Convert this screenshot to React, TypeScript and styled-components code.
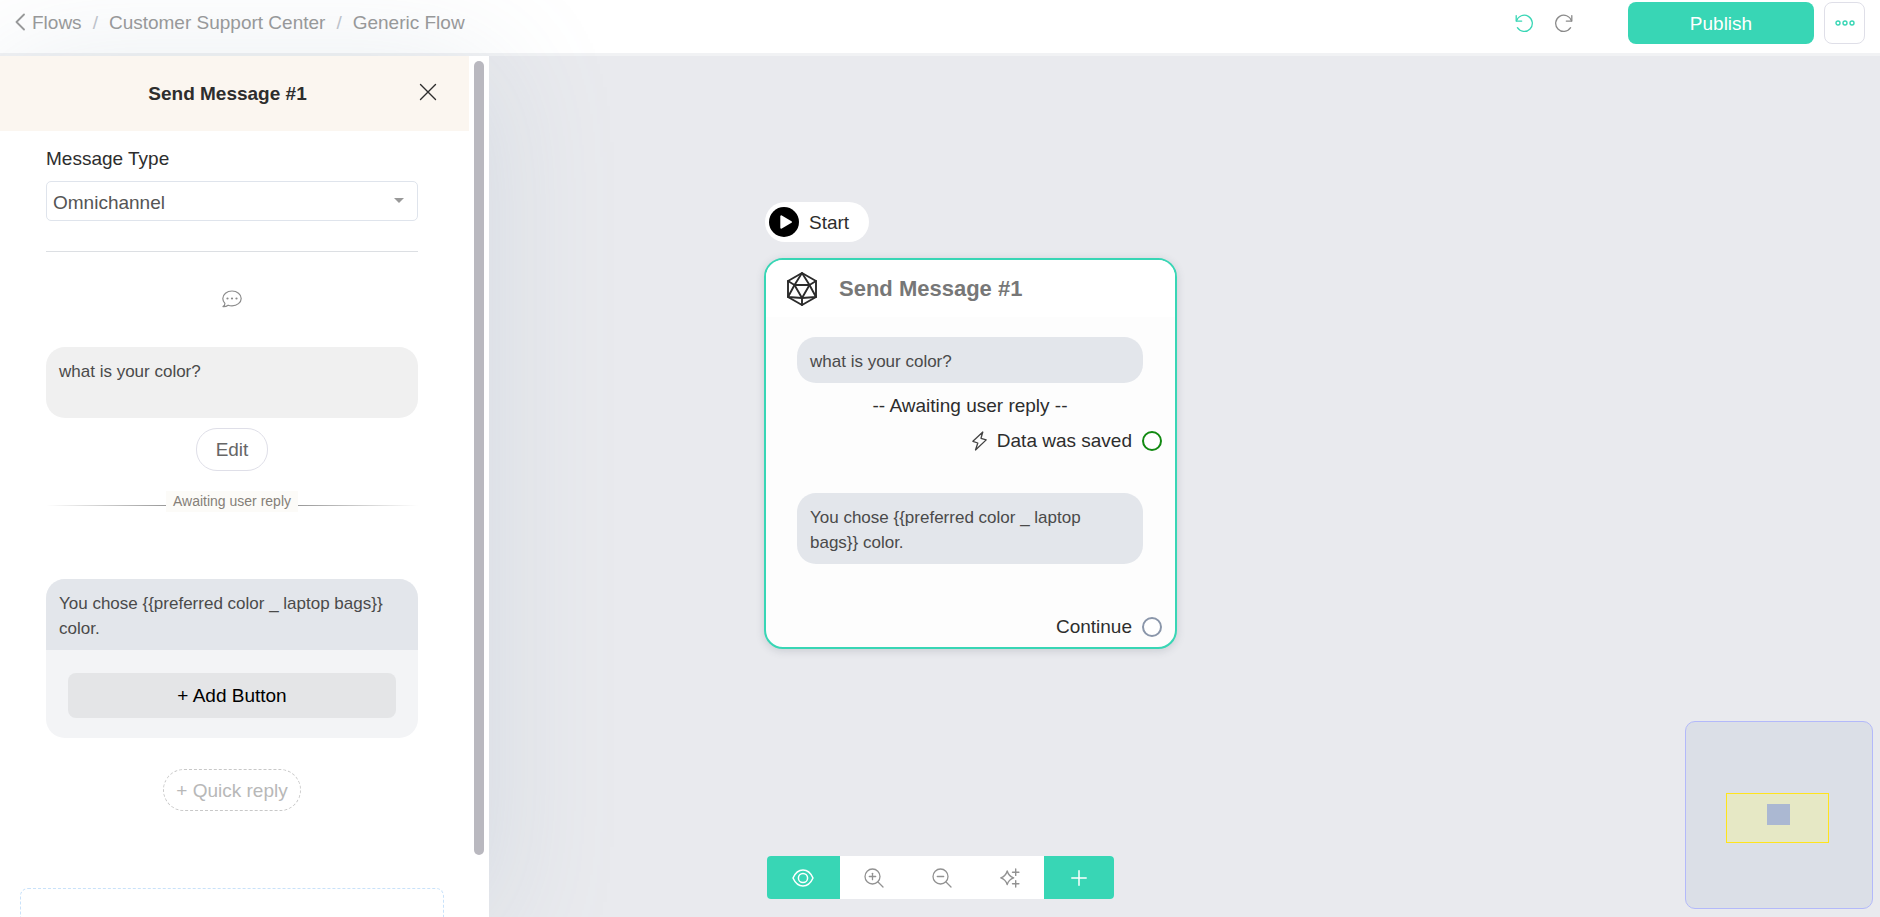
import React from "react";
import styled, { createGlobalStyle, css } from "styled-components";

const GlobalStyle = createGlobalStyle`
  *, *::before, *::after { box-sizing: border-box; }
  html, body, #root { height: 100%; }
  body {
    margin: 0;
    background: #e9eaee;
    color: #2d2d2d;
    font-family: "Liberation Sans", Arial, sans-serif;
    font-size: 19px;
    line-height: 25px;
  }
  button, select { font: inherit; color: inherit; margin: 0; }
  button { cursor: pointer; }
  h1, h2, p { margin: 0; }
  svg { display: block; flex: none; }
`;

const teal = "#38d6b5";

const Page = styled.div`
  display: flex;
  flex-direction: column;
  height: 100%;
  overflow: hidden;
`;

/* ---------- top bar ---------- */

const TopBar = styled.header`
  display: flex;
  align-items: flex-start;
  justify-content: space-between;
  height: 56px;
  flex: none;
  padding: 2px 15px 0 15px;
  background: #fff;
  border-bottom: 3px solid #f1f2f4;
`;

const Breadcrumbs = styled.nav`
  display: flex;
  align-items: center;
  gap: 11px;
  height: 40px;
  color: #c0c4cc;
`;

const Crumb = styled.a`
  display: flex;
  align-items: center;
  gap: 7px;
  color: #999;
  text-decoration: none;
`;

const Actions = styled.div`
  display: flex;
  align-items: center;
  gap: 10px;
`;

const History = styled.div`
  display: flex;
  gap: 17px;
  margin-right: 44px;
`;

const IconButton = styled.button<{ $color: string }>`
  display: flex;
  align-items: center;
  justify-content: center;
  width: 22px;
  height: 28px;
  padding: 0;
  border: 0;
  background: none;
  color: ${(p) => p.$color};
`;

const PublishButton = styled.button`
  width: 186px;
  height: 42px;
  border: 0;
  border-radius: 8px;
  background: ${teal};
  color: #fff;
`;

const MoreButton = styled.button`
  display: flex;
  align-items: center;
  justify-content: center;
  width: 41px;
  height: 42px;
  padding: 0;
  border: 1px solid #dfdfe8;
  border-radius: 8px;
  background: #fff;
  color: ${teal};
`;

/* ---------- side panel ---------- */

const Workspace = styled.main`
  position: relative;
  display: flex;
  flex: 1;
  min-height: 0;
`;

const SidePanel = styled.aside`
  display: flex;
  position: relative;
  z-index: 1;
  width: 489px;
  flex: none;
  background: #fff;
  box-shadow: 0 8px 120px rgba(130, 155, 175, 0.19);
`;

const PanelScroll = styled.div`
  flex: 1;
  min-width: 0;
  overflow: hidden;
`;

const ScrollTrack = styled.div`
  width: 20px;
  padding: 5px;
`;

const ScrollThumb = styled.div`
  height: calc(100% - 57px);
  border-radius: 5px;
  background: #b9b8bf;
`;

const PanelHeader = styled.div`
  display: flex;
  align-items: center;
  height: 75px;
  padding: 0 27px 0 41px;
  background: #fbf6f0;
`;

const PanelTitle = styled.h1`
  flex: 1;
  font-size: 19px;
  text-align: center;
`;

const CloseButton = styled.button`
  display: flex;
  align-items: flex-start;
  justify-content: center;
  width: 28px;
  height: 22px;
  padding: 0;
  border: 0;
  background: none;
`;

const PanelBody = styled.div`
  display: flex;
  flex-direction: column;
  align-items: center;
  padding: 15px 25px 0 20px;
`;

const Section = styled.section`
  display: flex;
  flex-direction: column;
  align-items: center;
  align-self: stretch;
  padding: 0 26px;
`;

const Field = styled.div`
  align-self: stretch;
  padding-bottom: 30px;
  border-bottom: 1px solid #dcdfe3;
`;

const FieldLabel = styled.label`
  display: block;
  margin-bottom: 10px;
`;

const SelectBox = styled.div`
  position: relative;
`;

const Select = styled.select`
  appearance: none;
  display: block;
  width: 100%;
  height: 40px;
  padding: 2px 30px 0 6px;
  border: 1px solid #dfe4ec;
  border-radius: 5px;
  background: #fff;
  color: #555;
`;

const Caret = styled.svg`
  position: absolute;
  top: 17px;
  right: 14px;
  pointer-events: none;
`;

const ChatMark = styled.div`
  padding: 38px 0 39px;
  color: #8c8c8c;
`;

const bubble = css`
  padding: 12px 13px 9px;
  color: #4a4a4a;
  font-size: 17px;
  line-height: 25px;
`;

const QuestionBubble = styled.p`
  ${bubble}
  align-self: stretch;
  min-height: 71px;
  border-radius: 19px;
  background: #f0f0f0;
`;

const PillButton = styled.button<{ $dashed?: boolean }>`
  height: ${(p) => (p.$dashed ? 42 : 43)}px;
  padding: 0 ${(p) => (p.$dashed ? 12 : 19)}px;
  border: 1px ${(p) => (p.$dashed ? "dashed #c8c8c8" : "solid #dfdfe8")};
  border-radius: 21px;
  background: #fff;
  color: ${(p) => (p.$dashed ? "#b8b8b8" : "#666")};
`;

const EditRow = styled.div`
  padding: 10px 0 20px;
`;

const WaitingRule = styled.div`
  display: flex;
  align-self: stretch;
  align-items: center;
  margin-bottom: 67px;
`;

const WaitingText = styled.span`
  padding: 0 7px;
  background: #fcfbf8;
  color: #857f78;
  font-size: 14px;
  line-height: 21px;
`;

const FadeLine = styled.span<{ $to: "left" | "right" }>`
  flex: 1;
  height: 1px;
  margin-top: 8px;
  background: linear-gradient(to ${(p) => p.$to}, #999, transparent);
`;

const ReplyCard = styled.div`
  align-self: stretch;
  overflow: hidden;
  margin-bottom: 31px;
  border-radius: 19px;
  background: #f3f4f6;
`;

const ReplyText = styled.p`
  ${bubble}
  background: #e3e6eb;
`;

const ReplyActions = styled.div`
  display: flex;
  padding: 23px 22px 20px;
`;

const AddButton = styled.button`
  flex: 1;
  height: 45px;
  border: 0;
  border-radius: 8px;
  background: #e4e5e7;
  color: #000;
`;

const DropZone = styled.div`
  align-self: stretch;
  height: 120px;
  margin-top: 77px;
  border: 1px dashed #c9e2fa;
  border-radius: 8px;
`;

/* ---------- canvas ---------- */

const Canvas = styled.div`
  position: relative;
  flex: 1;
  min-width: 0;
  overflow: hidden;
`;

const StartNode = styled.div`
  position: absolute;
  top: 146px;
  left: 276px;
  display: flex;
  align-items: center;
  gap: 10px;
  height: 40px;
  padding: 0 20px 0 4px;
  border-radius: 20px;
  background: #fff;
`;

const MessageNode = styled.article`
  position: absolute;
  top: 202px;
  left: 275px;
  width: 413px;
  overflow: hidden;
  border: 2px solid ${teal};
  border-radius: 19px;
  background: #fdfdfd;
  box-shadow: 0 2px 8px rgba(60, 70, 90, 0.18);
`;

const NodeHeader = styled.div`
  display: flex;
  align-items: center;
  gap: 22px;
  height: 57px;
  padding: 0 21px;
  background: #fff;
`;

const NodeTitle = styled.h2`
  color: #777;
  font-size: 22px;
`;

const NodeBody = styled.div`
  display: flex;
  flex-direction: column;
  padding: 20px 13px 8px 31px;
`;

const NodeBubble = styled.p`
  ${bubble}
  margin-right: 19px;
  border-radius: 19px;
  background: #e3e6eb;
`;

const NodeStatus = styled.p`
  margin: 10px 19px 10px 0;
  text-align: center;
`;

const Outlet = styled.div<{ $before?: number; $after?: number }>`
  display: flex;
  align-items: center;
  justify-content: flex-end;
  gap: 10px;
  margin-top: ${(p) => p.$before ?? 0}px;
  margin-bottom: ${(p) => p.$after ?? 0}px;
`;

const Port = styled.span<{ $color: string }>`
  width: 20px;
  height: 20px;
  border: 2px solid ${(p) => p.$color};
  border-radius: 50%;
  background: #fff;
`;

const ToolbarLayer = styled.div`
  position: absolute;
  right: 0;
  bottom: 18px;
  left: 0;
  display: flex;
  justify-content: center;
`;

const Toolbar = styled.div`
  display: flex;
  overflow: hidden;
  border-radius: 4px;
  background: #fff;
`;

const ToolButton = styled.button<{ $filled?: boolean; $width?: number }>`
  display: flex;
  align-items: center;
  justify-content: center;
  width: ${(p) => p.$width ?? 68}px;
  height: 43px;
  padding: 0;
  border: 0;
  background: ${(p) => (p.$filled ? teal : "#fff")};
  color: ${(p) => (p.$filled ? "#fff" : "#929292")};
`;

const MiniMap = styled.div`
  position: absolute;
  right: 7px;
  bottom: 8px;
  width: 188px;
  height: 188px;
  border: 1px solid #b3b9fa;
  border-radius: 10px;
  background: #dbdfe7;
`;

const MiniViewport = styled.div`
  position: absolute;
  top: 71px;
  left: 40px;
  width: 103px;
  height: 50px;
  border: 1px solid #ffe41c;
  background: #e6e8c5;
`;

const MiniNode = styled.div`
  position: absolute;
  top: 10px;
  left: 40px;
  width: 23px;
  height: 21px;
  background: #abb8d2;
`;

/* ---------- icons ---------- */

const line = {
  fill: "none",
  stroke: "currentColor",
  strokeLinecap: "round" as const,
  strokeLinejoin: "round" as const,
};

const ChevronIcon = () => (
  <svg width="10" height="18" viewBox="0 0 10 18" {...line} strokeWidth="1.8">
    <path d="M9 1.5 1.5 9 9 16.5" />
  </svg>
);

const TurnIcon = ({ flip }: { flip?: boolean }) => (
  <svg width="19" height="19" viewBox="0 0 19 19" {...line} strokeWidth="1.3">
    <g transform={flip ? "matrix(-1 0 0 1 19 0)" : undefined}>
      <path d="M1.2 1.6v5.500h5.500" />
      <path d="M1.500 6.900A8.100 8.100 0 1 1 2.400 13.700" />
    </g>
  </svg>
);

const MoreIcon = () => (
  <svg width="20" height="6" viewBox="0 0 20 6" {...line} strokeWidth="1.4">
    <circle cx="3" cy="3" r="2" />
    <circle cx="10" cy="3" r="2" />
    <circle cx="17" cy="3" r="2" />
  </svg>
);

const CloseIcon = () => (
  <svg width="18" height="18" viewBox="0 0 18 18" {...line} strokeWidth="1.4">
    <path d="M1.500 1.500l15 15M16.500 1.500l-15 15" />
  </svg>
);

const ChatIcon = () => (
  <svg width="20" height="18" viewBox="0 0 20 18" {...line} strokeWidth="1.2">
    <path d="M1 16.600c1.500-1 1.900-2.200 1.900-3.200C1.600 12 .8 10.300.8 8.500.8 4.300 4.900 1 10 1s9.200 3.300 9.200 7.400-4.100 7.400-9.200 7.400c-1.400 0-2.700-.2-3.900-.6-1.300 1-3.100 1.500-5.100 1.400z" />
    <g fill="currentColor" stroke="none">
      <circle cx="5.500" cy="8.500" r="1.100" />
      <circle cx="10" cy="8.500" r="1.100" />
      <circle cx="14.500" cy="8.500" r="1.100" />
    </g>
  </svg>
);

const PlayIcon = () => (
  <svg width="30" height="30" viewBox="0 0 30 30">
    <circle cx="15" cy="15" r="15" fill="#000" />
    <path
      d="M12.300 9.300v11.400L22 15z"
      fill="#fff"
      stroke="#fff"
      strokeWidth="2"
      strokeLinejoin="round"
    />
  </svg>
);

const PolyhedronIcon = () => (
  <svg width="30" height="34" viewBox="0 0 30 34" {...line} stroke="#2b2b2b" strokeWidth="1.9">
    <path d="M15 1l14 8v16l-14 8-14-8V9z" />
    <path d="M15 1L7.500 13h15z" />
    <path d="M7.500 13L15 26l7.500-13" />
    <path d="M1 9l6.500 4L1 25l14 1 14-1-6.500-12L29 9" />
    <path d="M15 26v7" />
  </svg>
);

const BoltIcon = () => (
  <svg width="15" height="20" viewBox="0 0 15 20" {...line} stroke="#444" strokeWidth="1.300">
    <path d="M10.800 1L.9 10.300l4.900 1.700L3.500 19 14.200 8.900 9 7.300z" />
  </svg>
);

const EyeIcon = () => (
  <svg width="22" height="18" viewBox="0 0 22 18" {...line} strokeWidth="1.500">
    <path d="M1 9c2.300-5.200 5.700-8 10-8s7.700 2.800 10 8c-2.300 5.200-5.700 8-10 8S3.300 14.200 1 9z" />
    <circle cx="11" cy="9" r="4.600" />
  </svg>
);

const ZoomIcon = ({ plus }: { plus?: boolean }) => (
  <svg width="20" height="20" viewBox="0 0 20 20" {...line} strokeWidth="1.300">
    <circle cx="8.500" cy="8.500" r="7.500" />
    <path d="M14 14l5 5M5.300 8.500h6.400" />
    {plus && <path d="M8.500 5.300v6.400" />}
  </svg>
);

const SparkleIcon = () => (
  <svg width="20" height="20" viewBox="0 0 20 20" {...line} strokeWidth="1.400">
    <path d="M7.200 3c1.200 4.100 2.700 5.600 6.500 6.800-3.800 1.200-5.300 2.700-6.500 6.800C6 12.500 4.500 11 .8 9.800 4.500 8.600 6 7.100 7.200 3z" />
    <path d="M15.700 1v6.400M12.500 4.200h6.400M15.700 12.600V19M12.500 15.800h6.400" />
  </svg>
);

const PlusIcon = () => (
  <svg width="16" height="16" viewBox="0 0 16 16" {...line} strokeWidth="1.500">
    <path d="M8 .8v14.400M.8 8h14.400" />
  </svg>
);

const question = "what is your color?";
const answer = "You chose {{preferred color _ laptop bags}} color.";

export default function App() {
  return (
    <Page>
      <GlobalStyle />
      <TopBar>
        <Breadcrumbs aria-label="Breadcrumb">
          <Crumb href="#flows">
            <ChevronIcon />
            Flows
          </Crumb>
          <span>/</span>
          <Crumb href="#support">Customer Support Center</Crumb>
          <span>/</span>
          <Crumb href="#generic">Generic Flow</Crumb>
        </Breadcrumbs>
        <Actions>
          <History>
            <IconButton $color={teal} aria-label="Undo">
              <TurnIcon />
            </IconButton>
            <IconButton $color="#8a8a8a" aria-label="Redo">
              <TurnIcon flip />
            </IconButton>
          </History>
          <PublishButton>Publish</PublishButton>
          <MoreButton aria-label="More options">
            <MoreIcon />
          </MoreButton>
        </Actions>
      </TopBar>

      <Workspace>
        <SidePanel>
          <PanelScroll>
            <PanelHeader>
              <PanelTitle>Send Message #1</PanelTitle>
              <CloseButton aria-label="Close">
                <CloseIcon />
              </CloseButton>
            </PanelHeader>
            <PanelBody>
              <Section>
                <Field>
                  <FieldLabel htmlFor="message-type">Message Type</FieldLabel>
                  <SelectBox>
                    <Select id="message-type" defaultValue="omni">
                      <option value="omni">Omnichannel</option>
                    </Select>
                    <Caret width="10" height="5" viewBox="0 0 10 5">
                      <path d="M0 0h10L5 5z" fill="#999" />
                    </Caret>
                  </SelectBox>
                </Field>
                <ChatMark>
                  <ChatIcon />
                </ChatMark>
                <QuestionBubble>{question}</QuestionBubble>
                <EditRow>
                  <PillButton>Edit</PillButton>
                </EditRow>
                <WaitingRule>
                  <FadeLine $to="left" />
                  <WaitingText>Awaiting user reply</WaitingText>
                  <FadeLine $to="right" />
                </WaitingRule>
                <ReplyCard>
                  <ReplyText>{answer}</ReplyText>
                  <ReplyActions>
                    <AddButton>+ Add Button</AddButton>
                  </ReplyActions>
                </ReplyCard>
                <PillButton $dashed>+ Quick reply</PillButton>
              </Section>
              <DropZone />
            </PanelBody>
          </PanelScroll>
          <ScrollTrack>
            <ScrollThumb />
          </ScrollTrack>
        </SidePanel>

        <Canvas>
          <StartNode>
            <PlayIcon />
            Start
          </StartNode>
          <MessageNode>
            <NodeHeader>
              <PolyhedronIcon />
              <NodeTitle>Send Message #1</NodeTitle>
            </NodeHeader>
            <NodeBody>
              <NodeBubble>{question}</NodeBubble>
              <NodeStatus>-- Awaiting user reply --</NodeStatus>
              <Outlet $after={40}>
                <BoltIcon />
                Data was saved
                <Port $color="#128a12" />
              </Outlet>
              <NodeBubble>{answer}</NodeBubble>
              <Outlet $before={50}>
                Continue
                <Port $color="#8a96aa" />
              </Outlet>
            </NodeBody>
          </MessageNode>
        </Canvas>

        <ToolbarLayer>
          <Toolbar>
            <ToolButton $filled $width={73} aria-label="Preview">
              <EyeIcon />
            </ToolButton>
            <ToolButton aria-label="Zoom in">
              <ZoomIcon plus />
            </ToolButton>
            <ToolButton aria-label="Zoom out">
              <ZoomIcon />
            </ToolButton>
            <ToolButton aria-label="Arrange">
              <SparkleIcon />
            </ToolButton>
            <ToolButton $filled $width={70} aria-label="Add step">
              <PlusIcon />
            </ToolButton>
          </Toolbar>
        </ToolbarLayer>
        <MiniMap>
          <MiniViewport>
            <MiniNode />
          </MiniViewport>
        </MiniMap>
      </Workspace>
    </Page>
  );
}
